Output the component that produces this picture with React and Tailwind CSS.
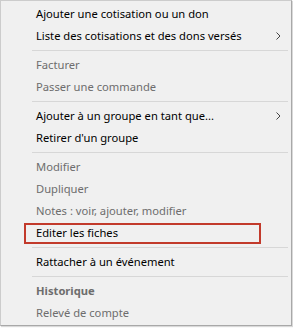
import React from "react";

const Chevron = () => (
  <svg width="5" height="8" viewBox="0 0 5 8" className="absolute right-[10px] top-[7px]">
    <path d="M0.5 0.5 L4 4 L0.5 7.5" fill="none" stroke="#444" strokeWidth="1" />
  </svg>
);

const Item = ({ children, disabled, bold, sub }) => (
  <div
    className={
      "relative h-[22px] flex items-center pl-[35px] text-[11.2px] leading-none " +
      (disabled ? "text-[#6d6d6d] " : "text-[#000] ") +
      (bold ? "font-bold " : "")
    }
  >
    <span>{children}</span>
    {sub && <Chevron />}
  </div>
);

const Sep = () => (
  <div className="h-[7px] flex items-center pl-[31px] pr-[3px]">
    <div className="h-px w-full bg-[#d7d7d7]" />
  </div>
);

export default function App() {
  return (
    <div className="w-[293px] h-[328px] bg-white">
      <div
        className="relative w-[292px] h-[326px] bg-[#f0f0f0] border border-[#cccccc] border-r-[#a8a8a8] border-b-[#a8a8a8] pt-[2px] shadow-[1px_1px_1px_rgba(0,0,0,0.15)]"
        style={{ fontFamily: '"Noto Sans", sans-serif' }}
      >
        <Item>Ajouter une cotisation ou un don</Item>
        <Item sub>Liste des cotisations et des dons versés</Item>
        <Sep />
        <Item disabled>Facturer</Item>
        <Item disabled>Passer une commande</Item>
        <Sep />
        <Item sub>Ajouter à un groupe en tant que...</Item>
        <Item>Retirer d'un groupe</Item>
        <Sep />
        <Item disabled>Modifier</Item>
        <Item disabled>Dupliquer</Item>
        <Item disabled>Notes : voir, ajouter, modifier</Item>
        <Item>Editer les fiches</Item>
        <Sep />
        <Item>Rattacher à un événement</Item>
        <Sep />
        <Item disabled bold>Historique</Item>
        <Item disabled>Relevé de compte</Item>
        <div className="absolute left-[23px] top-[222px] w-[237px] h-[21px] border-2 border-[#c23a2b] pointer-events-none" />
      </div>
    </div>
  );
}
